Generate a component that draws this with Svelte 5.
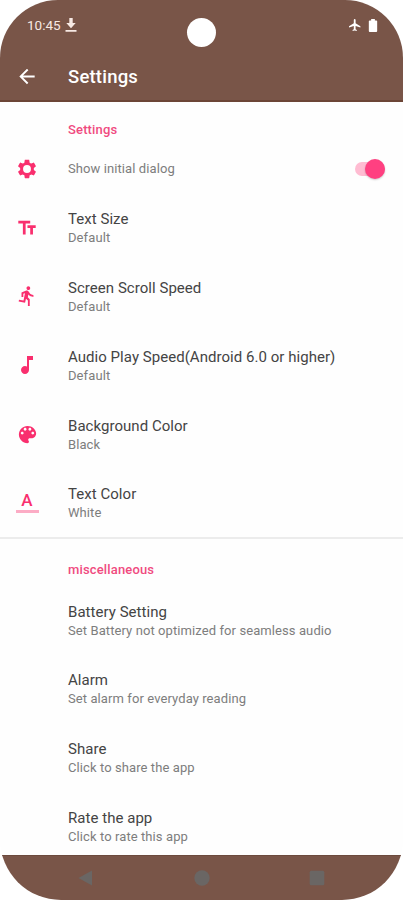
<script>
  let showDialog = true;

  const settings = [
    { icon: 'size', title: 'Text Size', summary: 'Default' },
    { icon: 'run', title: 'Screen Scroll Speed', summary: 'Default' },
    { icon: 'note', title: 'Audio Play Speed(Android 6.0 or higher)', summary: 'Default' },
    { icon: 'palette', title: 'Background Color', summary: 'Black' },
    { icon: 'color', title: 'Text Color', summary: 'White' },
  ];

  const misc = [
    { title: 'Battery Setting', summary: 'Set Battery not optimized for seamless audio' },
    { title: 'Alarm', summary: 'Set alarm for everyday reading' },
    { title: 'Share', summary: 'Click to share the app' },
    { title: 'Rate the app', summary: 'Click to rate this app' },
  ];

  // material icon paths, 24x24
  const icons = {
    size: 'M2.5 4v3h5v12h3V7h5V4h-13zm19 5h-9v3h3v7h3v-7h3V9z',
    run: 'M13.49 5.48c1.1 0 2-.9 2-2s-.9-2-2-2-2 .9-2 2 .9 2 2 2zm-3.6 13.9l1-4.4 2.1 2v6h2v-7.5l-2.1-2 .6-3c1.3 1.5 3.3 2.5 5.5 2.5v-2c-1.9 0-3.5-1-4.3-2.4l-1-1.6c-.4-.6-1-1-1.7-1-.3 0-.5.1-.8.1l-5.2 2.2v4.7h2v-3.4l1.8-.7-1.6 8.1-4.9-1-.4 2 7 1.4z',
    note: 'M12 3v10.55c-.59-.34-1.27-.55-2-.55-2.21 0-4 1.79-4 4s1.79 4 4 4 4-1.79 4-4V7h4V3h-6z',
    palette: 'M12 3c-4.97 0-9 4.03-9 9s4.03 9 9 9c.83 0 1.5-.67 1.5-1.5 0-.39-.15-.74-.39-1.01-.23-.26-.38-.61-.38-.99 0-.83.67-1.5 1.5-1.5H16c2.76 0 5-2.24 5-5 0-4.42-4.03-8-9-8zm-5.5 9c-.83 0-1.5-.67-1.5-1.5S5.67 9 6.5 9 8 9.67 8 10.5 7.33 12 6.5 12zm3-4C8.67 8 8 7.33 8 6.5S8.67 5 9.5 5s1.5.67 1.5 1.5S10.33 8 9.5 8zm5 0c-.83 0-1.5-.67-1.5-1.5S13.67 5 14.5 5s1.5.67 1.5 1.5S15.33 8 14.5 8zm3 4c-.83 0-1.5-.67-1.5-1.5S16.67 9 17.5 9s1.5.67 1.5 1.5-.67 1.5-1.5 1.5z',
  };
</script>

<div class="phone">
  <header>
    <div class="status">
      <span class="time">10:45</span>
      <svg class="download" viewBox="0 0 12 15"><path d="M4.3 0h3.4v5h3L6 10.3 1.3 5h3zM.5 12h11v1.8H.5z" /></svg>
      <span class="camera"></span>
      <svg class="plane" viewBox="2 2 20 20"><path d="M21 16v-2l-8-5V3.5c0-.83-.67-1.5-1.5-1.5S10 2.67 10 3.5V9l-8 5v2l8-2.5V19l-2 1.5V22l3.5-1 3.5 1v-1.5L13 19v-5.5l8 2.5z" /></svg>
      <svg class="battery" viewBox="0 0 10 14"><path d="M3 0h4v1.5h1.5q1 0 1 1V13q0 1-1 1h-7q-1 0-1-1V2.5q0-1 1-1H3z" /></svg>
    </div>
    <div class="toolbar">
      <svg class="back" viewBox="0 0 24 24"><path d="M20 11H7.83l5.59-5.59L12 4l-8 8 8 8 1.41-1.41L7.83 13H20v-2z" /></svg>
      <h1>Settings</h1>
    </div>
  </header>

  <main>
    <h2 class="first">Settings</h2>
    <div class="row dialog">
      <div class="icon">
        <svg viewBox="0 0 24 24">
          <path fill-rule="evenodd" d="M19.43 12.98c.04-.32.07-.64.07-.98s-.03-.66-.07-.98l2.11-1.65c.19-.15.24-.42.12-.64l-2-3.46c-.12-.22-.39-.3-.61-.22l-2.49 1c-.52-.4-1.08-.73-1.69-.98l-.38-2.65C14.46 2.18 14.25 2 14 2h-4c-.25 0-.46.18-.49.42l-.38 2.65c-.61.25-1.17.59-1.69.98l-2.49-1c-.23-.09-.49 0-.61.22l-2 3.46c-.13.22-.07.49.12.64l2.11 1.65c-.04.32-.07.65-.07.98s.03.66.07.98l-2.11 1.65c-.19.15-.24.42-.12.64l2 3.46c.12.22.39.3.61.22l2.49-1c.52.4 1.08.73 1.69.98l.38 2.65c.03.24.24.42.49.42h4c.25 0 .46-.18.49-.42l.38-2.65c.61-.25 1.17-.59 1.69-.98l2.49 1c.23.09.49 0 .61-.22l2-3.46c.12-.22.07-.49-.12-.64l-2.11-1.65zM12 16.3a4.3 4.3 0 1 1 0-8.6 4.3 4.3 0 0 1 0 8.6z" />
        </svg>
      </div>
      <p class="label">Show initial dialog</p>
      <button class="switch" class:on={showDialog} aria-label="Show initial dialog" on:click={() => showDialog = !showDialog}>
        <span class="thumb"></span>
      </button>
    </div>

    {#each settings as item}
      <div class="row">
        <div class="icon">
          {#if item.icon === 'color'}
            <div class="letter">A</div>
          {:else}
            <svg class={item.icon} viewBox="0 0 24 24"><path d={icons[item.icon]} /></svg>
          {/if}
        </div>
        <div class="text">
          <h3>{item.title}</h3>
          <p>{item.summary}</p>
        </div>
      </div>
    {/each}

    <hr />
    <h2 class="second">miscellaneous</h2>

    {#each misc as item}
      <div class="row">
        <div class="icon"></div>
        <div class="text">
          <h3>{item.title}</h3>
          <p>{item.summary}</p>
        </div>
      </div>
    {/each}
  </main>

  <footer>
    <svg viewBox="0 0 16 16"><path d="M14 .5v15L.5 8z" /></svg>
    <svg viewBox="0 0 16 16"><circle cx="8" cy="8" r="7.7" /></svg>
    <svg viewBox="0 0 16 16"><rect x=".7" y=".7" width="14.6" height="14.6" rx="1.5" /></svg>
  </footer>
</div>

<style>
  :global(body) {
    margin: 0;
    background: #fff;
  }

  .phone {
    display: flex;
    flex-direction: column;
    width: 403px;
    height: 900px;
    overflow: hidden;
    background: #fefefe;
    border-radius: 58px 58px 61px 61px;
    font-family: Roboto, sans-serif;
  }

  h1, h2, h3, p {
    margin: 0;
    font-weight: 400;
    white-space: nowrap;
  }

  svg {
    display: block;
    fill: currentColor;
  }

  header {
    box-sizing: border-box;
    flex: none;
    height: 102px;
    background: #795548;
    border-bottom: 2px solid #6c4536;
    color: #fff;
  }

  .status {
    display: flex;
    align-items: center;
    height: 50px;
    padding: 0 25px 0 27px;
    position: relative;
  }

  .time {
    font-size: 13.5px;
    color: #f7e9e4;
  }

  .download {
    width: 12px;
    height: 15px;
    margin-left: 4px;
    color: #f7e9e4;
  }

  .camera {
    position: absolute;
    left: 187px;
    top: 18px;
    width: 29px;
    height: 29px;
    border-radius: 50%;
    background: #fff;
  }

  .plane {
    width: 12px;
    height: 12px;
    margin-left: auto;
    margin-right: 7px;
  }

  .battery {
    width: 10px;
    height: 13px;
  }

  .toolbar {
    display: flex;
    align-items: center;
    height: 53px;
    padding-left: 15px;
  }

  .back {
    width: 24px;
    height: 23px;
  }

  h1 {
    margin-left: 29px;
    font-size: 18.5px;
    font-weight: 500;
    letter-spacing: 0.2px;
  }

  main {
    flex: 1;
    min-height: 0;
    overflow: hidden;
  }

  h2 {
    padding-left: 68px;
    font-size: 13px;
    line-height: 20px;
    font-weight: 500;
    letter-spacing: 0.15px;
    color: #f04a80;
  }

  .first {
    padding-top: 18px;
  }

  .second {
    padding-top: 21px;
    padding-bottom: 5.7px;
  }

  .row {
    display: flex;
    align-items: center;
    height: 68.7px;
  }

  .dialog {
    height: 53.6px;
    padding: 5px 18px 0 0;
    box-sizing: border-box;
  }

  .icon {
    display: flex;
    justify-content: center;
    flex: none;
    width: 54px;
    margin-right: 14px;
    color: #f92f6e;
  }

  .icon svg {
    width: 22px;
    height: 22px;
  }

  .icon .run {
    width: 22px;
    height: 22px;
    margin-top: -2px;
  }

  .icon .note {
    width: 24px;
    height: 24px;
    margin-top: -1px;
  }

  .icon .palette {
    width: 23px;
    height: 23px;
  }

  .letter {
    width: 23px;
    margin-top: -3px;
    border-bottom: 3px solid #fcacc5;
    font-size: 17px;
    line-height: 20px;
    font-weight: 500;
    text-align: center;
  }

  .text {
    padding-top: 1px;
  }

  h3 {
    font-size: 15px;
    line-height: 20px;
    letter-spacing: 0.04px;
    color: #444;
  }

  p {
    font-size: 13px;
    line-height: 18px;
    letter-spacing: 0.09px;
    color: #7d7d7d;
  }

  .switch {
    display: flex;
    align-items: center;
    width: 30px;
    height: 14px;
    margin-left: auto;
    padding: 0;
    border: 0;
    border-radius: 7px;
    background: #ccc;
  }

  .switch.on {
    justify-content: flex-end;
    background: #ffbcd2;
  }

  .thumb {
    width: 20px;
    height: 20px;
    border-radius: 50%;
    background: #fafafa;
    box-shadow: 0 1px 2px rgba(0, 0, 0, 0.2);
  }

  .on .thumb {
    background: #ff4081;
  }

  hr {
    height: 2px;
    margin: 0;
    border: 0;
    background: #ececec;
  }

  footer {
    display: flex;
    justify-content: space-between;
    align-items: center;
    box-sizing: border-box;
    flex: none;
    height: 45px;
    padding: 0 78px;
    background: #795548;
    border-top: 1px solid #6c4a3d;
    color: #6a6664;
  }

  footer svg {
    width: 16px;
    height: 16px;
  }
</style>
